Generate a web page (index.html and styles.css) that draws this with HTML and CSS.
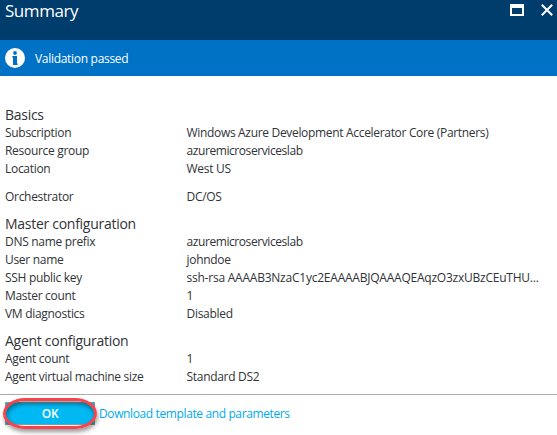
FILE: index.html
```html
<!DOCTYPE html>
<html lang="en">
<head>
<meta charset="utf-8">
<title>Summary</title>
<link rel="stylesheet" href="styles.css">
</head>
<body>
<main class="blade">
  <header class="titlebar">
    <h1>Summary</h1>
    <svg class="maximize" width="14" height="12" viewBox="0 0 14 12"><path fill="#fff" fill-rule="evenodd" d="M0 0h14v12H0zM2 4v6h10V4z"/></svg>
    <svg class="close" width="12" height="12" viewBox="0 0 12 12"><path d="M.8.8l10.4 10.4M11.2.8L.8 11.2" stroke="#fff" stroke-width="2"/></svg>
  </header>
  <div class="status">
    <svg width="20" height="20" viewBox="0 0 20 20"><circle cx="10" cy="10" r="10" fill="#fff"/><circle cx="10" cy="5" r="1.9" fill="#0072c6"/><path fill="#0072c6" d="M8 8h4v7.500h.7V17H8V9.500h-.7V8z"/></svg>
    <span>Validation passed</span>
  </div>
  <div class="content">
    <section>
      <h2>Basics</h2>
      <dl>
        <dt>Subscription</dt><dd class="subscription">Windows Azure Development Accelerator Core (Partners)</dd>
        <dt>Resource group</dt><dd class="name">azuremicroserviceslab</dd>
        <dt>Location</dt><dd>West US</dd>
      </dl>
      <dl class="orchestrator">
        <dt>Orchestrator</dt><dd>DC/OS</dd>
      </dl>
    </section>
    <section>
      <h2>Master configuration</h2>
      <dl>
        <dt>DNS name prefix</dt><dd class="name">azuremicroserviceslab</dd>
        <dt>User name</dt><dd>johndoe</dd>
        <dt>SSH public key</dt><dd class="key">ssh-rsa AAAAB3NzaC1yc2EAAAABJQAAAQEAqzO3zxUBzCEuTHU...</dd>
        <dt>Master count</dt><dd>1</dd>
        <dt>VM diagnostics</dt><dd>Disabled</dd>
      </dl>
    </section>
    <section>
      <h2>Agent configuration</h2>
      <dl>
        <dt>Agent count</dt><dd>1</dd>
        <dt>Agent virtual machine size</dt><dd>Standard DS2</dd>
      </dl>
    </section>
  </div>
  <footer>
    <button type="button">OK</button>
    <a>Download template and parameters</a>
  </footer>
</main>
</body>
</html>
```
FILE: styles.css
```css
* { box-sizing: border-box; }
body {
  margin: 0;
  background: #fff;
  color: #303337;
  font: 12px/18px "Open Sans", "Noto Sans", sans-serif;
  letter-spacing: -0.3px;
}
.blade { height: 435px; display: flex; flex-direction: column; overflow: hidden; }
.titlebar {
  display: flex;
  height: 40px;
  padding: 4px 4px 0 5px;
  background: #003c6c;
  color: #fff;
}
h1 {
  flex: 1;
  margin: 0;
  font-size: 17px;
  line-height: 14px;
  font-weight: 400;
  letter-spacing: -0.45px;
}
.maximize { margin-right: 17px; }
.status {
  display: flex;
  align-items: center;
  gap: 10px;
  height: 36px;
  padding-left: 5px;
  background: #0072c6;
  color: #fff;
}
.status span { padding-top: 2px; }
.content { height: 318px; padding: 30px 0 0 5px; }
section { margin-bottom: 9px; }
h2 {
  margin: 0;
  font-size: 14px;
  line-height: 18px;
  font-weight: 400;
  letter-spacing: -0.28px;
}
dl {
  display: grid;
  grid-template-columns: 182px 1fr;
  grid-auto-rows: 18px;
  margin: 0;
}
dd { margin: 0 0 0 -0.5px; white-space: nowrap; }
.subscription { letter-spacing: -0.32px; }
.name { letter-spacing: -0.42px; }
.key { letter-spacing: -0.23px; }
.orchestrator { margin-top: 10px; }
footer {
  display: flex;
  flex: 1;
  gap: 4px;
  padding: 7px 0 0 5px;
  border-top: 1px solid #aaa;
}
button {
  position: relative;
  width: 90px;
  height: 23px;
  padding: 0;
  border: 1px solid #8b989f;
  background: #00b9f2;
  color: #fff;
  font: 600 12px/20px "Open Sans", sans-serif;
  letter-spacing: -0.3px;
}
button::after {
  content: "";
  position: absolute;
  inset: -5px -3px -5px -3px;
  border: 3px solid #f5444b;
  border-radius: 22px / 15.5px;
  box-shadow: 1px 3px 4px #0006, inset 1px 3px 4px #0006;
}
a { color: #00abec; line-height: 23px; letter-spacing: -0.38px; }
```
